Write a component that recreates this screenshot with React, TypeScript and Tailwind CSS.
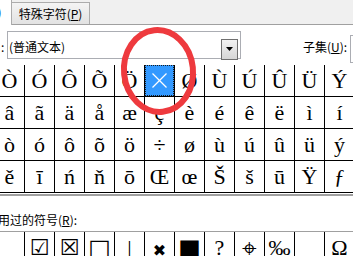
import React from 'react';

const cjk = "font-['Microsoft_YaHei','Noto_Sans_CJK_SC',sans-serif]";

const rows: string[][] = [
  ['Ò', 'Ó', 'Ô', 'Õ', 'Ö', '×', 'Ø', 'Ù', 'Ú', 'Û', 'Ü', 'Ý'],
  ['â', 'ã', 'ä', 'å', 'æ', 'ç', 'è', 'é', 'ê', 'ë', 'ì', 'í'],
  ['ò', 'ó', 'ô', 'õ', 'ö', '÷', 'ø', 'ù', 'ú', 'û', 'ü', 'ý'],
  ['ě', 'ī', 'ń', 'ň', 'ō', 'Œ', 'œ', 'Š', 'š', 'ū', 'Ÿ', 'ƒ'],
];

const recent: { ch: string; cls: string }[] = [
  { ch: '', cls: '' },
  { ch: '☑', cls: "font-['DejaVu_Sans'] font-bold text-[22px]" },
  { ch: '☒', cls: "font-['DejaVu_Sans'] font-bold text-[22px]" },
  { ch: '□', cls: "font-['DejaVu_Sans'] font-bold text-[24px]" },
  { ch: '|', cls: "font-['Liberation_Serif'] text-[22px]" },
  { ch: '✖', cls: "font-['DejaVu_Sans'] text-[16px] pt-[3px]" },
  { ch: '■', cls: "font-['DejaVu_Sans'] text-[24px]" },
  { ch: '?', cls: "font-['Liberation_Serif'] text-[22px]" },
  { ch: '⌖', cls: "font-['DejaVu_Sans'] text-[26px]" },
  { ch: '‰', cls: "font-['Liberation_Serif'] text-[22px]" },
  { ch: '', cls: '' },
  { ch: 'Ω', cls: "font-['Liberation_Serif'] text-[22px]" },
];

const SelectedCell: React.FC = () => (
  <div className="w-[30px] h-[32px] shrink-0 border-r border-b border-black">
    <div className="h-full bg-[#3399ff] border border-dotted border-[#1b1b1b] flex items-center justify-center">
      <svg width="15" height="15" viewBox="0 0 15 15">
        <line x1="0.5" y1="0.5" x2="14.5" y2="14.5" stroke="white" strokeWidth="1.2" />
        <line x1="14.5" y1="0.5" x2="0.5" y2="14.5" stroke="white" strokeWidth="1.2" />
      </svg>
    </div>
  </div>
);

export default function App() {
  return (
    <div className={`relative w-[353px] h-[256px] overflow-hidden bg-white text-[12px] text-black ${cjk}`}>
      {/* tab strip */}
      <div className="flex h-[25px]">
        <div className="relative w-[12px] h-[25px] bg-white border-r border-[#acacac] overflow-hidden">
          <span className="absolute left-[-3px] top-[4px] leading-[16px] font-bold text-[#1f63d6]">)</span>
        </div>
        <div className="flex-1 h-[25px] border-b border-[#a0a0a0] bg-[#f0f0f0] pt-[2px]">
          <div className="w-[78px] h-[22px] border-t border-r border-[#acacac] bg-gradient-to-b from-[#f4f4f4] to-[#e2e2e2] flex items-center justify-center leading-[16px] whitespace-nowrap">
            特殊字符(<span className="underline">P</span>)
          </div>
        </div>
      </div>

      {/* font / subset row */}
      <div className="flex h-[40px] items-start w-[400px]">
        <span className="w-[7px] shrink-0 pl-[1px] pt-[14px] leading-[16px]">:</span>
        <div className="mt-[6px] w-[234px] shrink-0 h-[28px] border border-[#abadb3] flex items-center">
          <span className="flex-1 pl-[1px] pt-[4px] leading-[16px] whitespace-nowrap">(普通文本)</span>
          <div className="mt-[8px] mr-[2px] w-[17px] h-[21px] border border-[#707070] bg-gradient-to-b from-[#f2f2f2] to-[#d6d6d6] flex items-center justify-center">
            <svg width="7" height="4" viewBox="0 0 7 4">
              <path d="M0 0h7L3.5 4z" fill="#000" />
            </svg>
          </div>
        </div>
        <span className="ml-[62px] shrink-0 pt-[14px] leading-[16px] whitespace-nowrap">
          子集(<span className="underline">U</span>):
        </span>
        <div className="ml-[3px] mt-[10px] w-[20px] shrink-0 h-[28px] border border-[#abadb3]" />
      </div>

      {/* symbol grid */}
      <div className="-ml-[5px] w-[360px]">
        {rows.map((row, r) => (
          <div key={r} className="flex">
            {row.map((ch, c) =>
              r === 0 && c === 5 ? (
                <SelectedCell key={c} />
              ) : (
                <div
                  key={c}
                  className="w-[30px] h-[32px] shrink-0 border-r border-b border-black flex justify-center font-['Liberation_Serif',serif] text-[22px] leading-[32px]"
                >
                  {ch}
                </div>
              ),
            )}
          </div>
        ))}
      </div>
      <div className="mt-[1px] h-[2px] bg-[#a0a0a0]" />

      {/* recently used */}
      <div className="h-[35px] pt-[16px] -ml-[2px] leading-[16px] whitespace-nowrap">
        用过的符号(<span className="underline">R</span>):
      </div>
      <div className="h-[1px] bg-[#a0a0a0]" />
      <div className="-ml-[5px] w-[360px] flex">
        {recent.map((s, i) => (
          <div
            key={i}
            className={`w-[30px] h-[32px] shrink-0 border-r border-black flex justify-center leading-[32px] ${s.cls}`}
          >
            {s.ch}
          </div>
        ))}
      </div>

      {/* red annotation ellipse */}
      <svg className="absolute left-0 top-0 pointer-events-none" width="353" height="256">
        <ellipse cx="158.5" cy="71" rx="34.5" ry="41" fill="none" stroke="#ee3a3e" strokeWidth="6" transform="rotate(-6 158.5 71)" />
      </svg>
    </div>
  );
}
